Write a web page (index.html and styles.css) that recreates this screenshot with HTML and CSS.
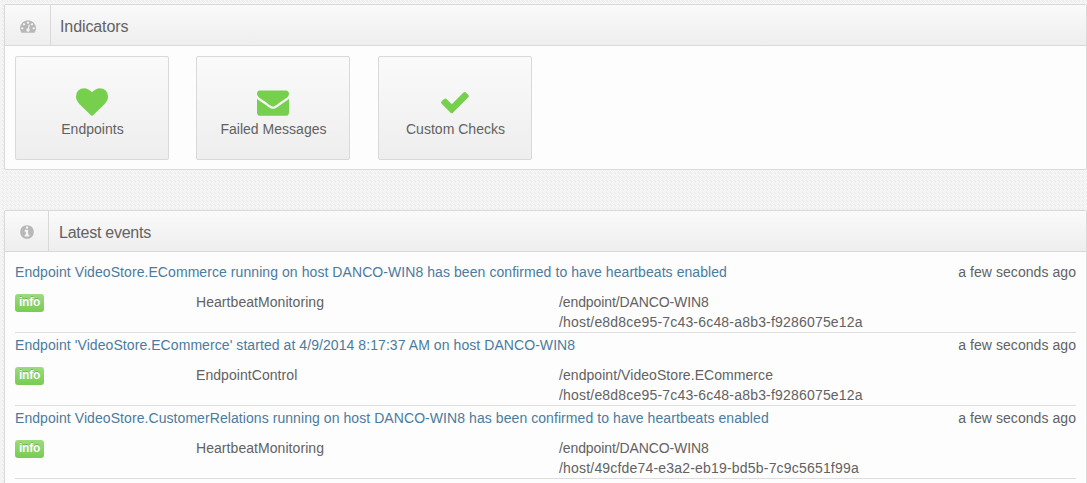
FILE: index.html
```html
<!DOCTYPE html>
<html lang="en">
<head>
<meta charset="utf-8">
<title>Dashboard</title>
<link rel="stylesheet" href="styles.css">
</head>
<body>
<main class="page">
  <section class="panel indicators">
    <header class="panel-head">
      <span class="head-icon"><svg viewBox="0 0 1792 1792"><path d="M384 1152q0-53-37.500-90.500t-90.500-37.500-90.500 37.500-37.500 90.500 37.500 90.500 90.500 37.500 90.500-37.500 37.500-90.500zm192-448q0-53-37.500-90.500t-90.500-37.500-90.500 37.500-37.500 90.500 37.500 90.500 90.500 37.500 90.500-37.500 37.500-90.500zm428 481l101-382q6-26-7.500-48.500t-38.500-29.500-48 6.500-30 39.500l-101 382q-60 5-107 43.500t-63 98.500q-20 77 20 146t117 89 146-20 89-117q16-60-6-117t-72-91zm660-33q0-53-37.500-90.500t-90.500-37.500-90.500 37.500-37.500 90.500 37.500 90.500 90.500 37.500 90.500-37.500 37.500-90.500zm-640-640q0-53-37.500-90.500t-90.500-37.500-90.500 37.500-37.500 90.500 37.500 90.500 90.500 37.500 90.500-37.500 37.500-90.500zm448 192q0-53-37.500-90.500t-90.500-37.500-90.500 37.500-37.500 90.500 37.500 90.500 90.500 37.500 90.500-37.500 37.500-90.500zm320 448q0 261-141 483-19 29-54 29h-1402q-35 0-54-29-141-221-141-483 0-182 71-348t191-286 286-191 348-71 348 71 286 191 191 286 71 348z"/></svg></span>
      <h2 class="head-title">Indicators</h2>
    </header>
    <div class="cards">
      <a class="card"><svg viewBox="0 0 1792 1792"><path d="M896 1664q-26 0-44-18l-624-602q-10-8-27.500-26t-55.500-65.500-68-97.500-53.500-121-23.500-138q0-220 127-344t351-124q62 0 126.500 21.500t120 58 95.500 68.500 76 68q36-36 76-68t95.500-68.500 120-58 126.500-21.500q224 0 351 124t127 344q0 221-229 450l-623 600q-18 18-44 18z"/></svg><span class="card-label">Endpoints</span></a>
      <a class="card"><svg viewBox="0 0 1792 1792"><path d="M1792 710v794q0 66-47 113t-113 47h-1472q-66 0-113-47t-47-113v-794q44 49 101 87 362 246 497 345 57 42 92.500 65.500t94.500 48 110 24.500h2q51 0 110-24.500t94.500-48 92.500-65.500q170-123 498-345 57-39 100-87zm0-294q0 79-49 151t-122 123q-376 261-468 325-10 7-42.500 30.500t-54 38-52 32.500-57.500 27-50 9h-2q-23 0-50-9t-57.500-27-52-32.500-54-38-42.500-30.500q-91-64-262-182.500t-205-142.500q-62-42-117-115.500t-55-136.500q0-78 41.500-130t118.500-52h1472q65 0 112.500 47t47.500 113z"/></svg><span class="card-label">Failed Messages</span></a>
      <a class="card"><svg viewBox="0 0 1792 1792"><path d="M1671 566q0 40-28 68l-724 724-136 136q-28 28-68 28t-68-28l-136-136-362-362q-28-28-28-68t28-68l136-136q28-28 68-28t68 28l294 295 656-657q28-28 68-28t68 28l136 136q28 28 28 68z"/></svg><span class="card-label">Custom Checks</span></a>
    </div>
  </section>

  <section class="panel events">
    <header class="panel-head">
      <span class="head-icon"><svg viewBox="0 0 1792 1792"><path d="M1152 1376v-160q0-14-9-23t-23-9h-96v-512q0-14-9-23t-23-9h-320q-14 0-23 9t-9 23v160q0 14 9 23t23 9h96v320h-96q-14 0-23 9t-9 23v160q0 14 9 23t23 9h448q14 0 23-9t9-23zm-128-896v-160q0-14-9-23t-23-9h-192q-14 0-23 9t-9 23v160q0 14 9 23t23 9h192q14 0 23-9t9-23zm640 416q0 209-103 385.500t-279.500 279.500-385.500 103-385.500-103-279.500-279.500-103-385.500 103-385.500 279.500-279.500 385.500-103 385.500 103 279.500 279.500 103 385.500z"/></svg></span>
      <h2 class="head-title">Latest events</h2>
    </header>
    <div class="event-list">
      <article class="event">
        <div class="event-top"><a class="event-link">Endpoint VideoStore.ECommerce running on host DANCO-WIN8 has been confirmed to have heartbeats enabled</a><span class="event-time">a few seconds ago</span></div>
        <div class="event-info"><div><span class="badge">info</span></div><div class="source">HeartbeatMonitoring</div><div><div class="endpoint">/endpoint/DANCO-WIN8</div><div class="host">/host/e8d8ce95-7c43-6c48-a8b3-f9286075e12a</div></div></div>
      </article>
      <article class="event">
        <div class="event-top"><a class="event-link">Endpoint 'VideoStore.ECommerce' started at 4/9/2014 8:17:37 AM on host DANCO-WIN8</a><span class="event-time">a few seconds ago</span></div>
        <div class="event-info"><div><span class="badge">info</span></div><div class="source">EndpointControl</div><div><div class="source">/endpoint/VideoStore.ECommerce</div><div class="host">/host/e8d8ce95-7c43-6c48-a8b3-f9286075e12a</div></div></div>
      </article>
      <article class="event">
        <div class="event-top"><a class="event-link">Endpoint VideoStore.CustomerRelations running on host DANCO-WIN8 has been confirmed to have heartbeats enabled</a><span class="event-time">a few seconds ago</span></div>
        <div class="event-info"><div><span class="badge">info</span></div><div class="source">HeartbeatMonitoring</div><div><div class="endpoint">/endpoint/DANCO-WIN8</div><div class="host">/host/49cfde74-e3a2-eb19-bd5b-7c9c5651f99a</div></div></div>
      </article>
    </div>
  </section>
</main>
</body>
</html>
```
FILE: styles.css
```css
* { box-sizing: border-box; }

body {
  margin: 0;
  font: 14px/20px "Liberation Sans", Arial, sans-serif;
  color: #626262;
  background-color: #f8f8f8;
  background-image:
    conic-gradient(#f0f0f0 25%, transparent 0 50%, #f0f0f0 0 75%, transparent 0),
    conic-gradient(#ececec 25%, transparent 0);
  background-size: 2px 2px, 4px 4px;
}

.page {
  display: flex;
  flex-direction: column;
  gap: 40px;
  padding: 4px 0 0 4px;
}

.panel {
  background: #fdfdfd;
  border: 1px solid #d9d9d9;
  border-radius: 2px;
}

.indicators { height: 166px; }

.events {
  height: 273px;
  border-bottom: 0;
  border-radius: 2px 2px 0 0;
}

.panel-head {
  display: flex;
  height: 41px;
  background: linear-gradient(#fafafa, #eeeeee);
  border-bottom: 1px solid #d9d9d9;
}

.head-icon {
  width: 46px;
  padding: 13px 0 0 15px;
  border-right: 1px solid #d9d9d9;
}

.events .head-icon {
  width: 44px;
  padding-left: 14px;
}

.head-icon svg {
  display: block;
  width: 16px;
  height: 16px;
  fill: #b8b8b8;
}

.head-title {
  margin: 0;
  padding: 2px 0 0 9px;
  font-size: 16px;
  font-weight: 400;
  line-height: 40px;
  letter-spacing: -0.1px;
}

.events .head-title {
  padding-left: 10px;
  letter-spacing: -0.25px;
}

.cards {
  display: grid;
  grid-template-columns: 181px 182px 154px;
  padding: 10px;
}

.card {
  display: flex;
  flex-direction: column;
  align-items: center;
  width: 154px;
  height: 104px;
  padding-top: 29px;
  border: 1px solid #d9d9d9;
  border-radius: 2px;
  background: linear-gradient(#fafafa, #eeeeee);
}

.card svg {
  width: 32px;
  height: 32px;
  fill: #77cf4e;
}

.card-label {
  margin-top: 1px;
  padding-left: 1px;
  letter-spacing: 0.02px;
}

.event-list { padding: 10px 10px 0; }

.event { border-bottom: 1px solid #dedede; }
.event + .event { margin-top: 2px; }

.event-top {
  display: flex;
  justify-content: space-between;
  margin-bottom: 10px;
}

.event-link {
  color: #4b7b9e;
  letter-spacing: 0.07px;
}

.event-time,
.source { letter-spacing: 0.06px; }

.endpoint { letter-spacing: -0.1px; }
.host { letter-spacing: 0.19px; }

.event-info {
  display: grid;
  grid-template-columns: 181px 363px 1fr;
}

.badge {
  display: block;
  width: 29px;
  height: 18px;
  margin-top: 2px;
  border-radius: 3px;
  background: linear-gradient(#9bdc7d, #77cc51);
  color: #fff;
  font-size: 12px;
  font-weight: 700;
  line-height: 17px;
  letter-spacing: -0.2px;
  text-align: center;
  text-shadow: 0 -1px 0 rgba(0, 0, 0, 0.2);
}
```
